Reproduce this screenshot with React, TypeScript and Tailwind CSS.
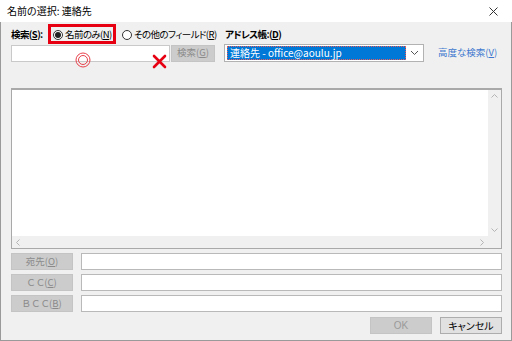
import React from "react";

const jp = "font-['Noto_Sans_CJK_JP','Noto_Sans',sans-serif] [font-feature-settings:'palt']";

function Radio({ checked }: { checked?: boolean }) {
  return (
    <span className="w-[10px] h-[10px] rounded-full border border-[#333] bg-white flex items-center justify-center shrink-0">
      {checked && <span className="w-[6px] h-[6px] rounded-full bg-[#222]" />}
    </span>
  );
}

function GrayButton({ children, className = "" }: { children: React.ReactNode; className?: string }) {
  return (
    <div className={`h-[17px] shrink-0 bg-[#cccccc] border border-[#c4c4c4] flex items-center justify-center whitespace-nowrap text-[#8a8a8a] text-[9.5px] leading-none ${className}`}>
      {children}
    </div>
  );
}

function RecipientRow({ label }: { label: React.ReactNode }) {
  return (
    <div className="flex items-center h-[17px]">
      <GrayButton className="w-[62px]">{label}</GrayButton>
      <div className="ml-[8px] flex-1 h-[17px] bg-white border border-[#b9b9b9]" />
    </div>
  );
}

export default function App() {
  return (
    <div className={`w-[512px] h-[341px] flex flex-col text-[9.5px] text-black whitespace-nowrap ${jp}`}>
      {/* Title bar */}
      <div className="h-[22px] bg-white flex items-center justify-between pl-[7px] pr-[14px] shrink-0">
        <span className="text-[10px] leading-none">名前の選択: 連絡先</span>
        <svg width="9" height="9" viewBox="0 0 9 9" className="text-[#333]">
          <path d="M0.5 0.5 L8.5 8.5 M8.5 0.5 L0.5 8.5" stroke="currentColor" strokeWidth="1" />
        </svg>
      </div>

      {/* Body */}
      <div className="relative flex-1 bg-[#f0f0f0] border-x border-b border-[#9a9a9a] pl-[10px] pr-[9px] flex flex-col">
        {/* Row 1 */}
        <div className="mt-[4px] h-[18px] flex items-center leading-none tracking-[-0.6px]">
          <span className="w-[39px] shrink-0 font-bold">
            検索(<span className="underline">S</span>):
          </span>
          <div className="w-[71px] shrink-0 flex items-center pl-[3px] gap-[2px]">
            <Radio checked />
            <span>名前のみ(<span className="underline">N</span>)</span>
          </div>
          <div className="w-[104px] shrink-0 flex items-center pl-[1px] gap-[2px]">
            <Radio />
            <span>その他のフィールド(<span className="underline">R</span>)</span>
          </div>
          <span className="font-bold">
            アドレス帳:(<span className="underline">D</span>)
          </span>
        </div>

        {/* Row 2 */}
        <div className="h-[18px] flex items-center">
          <div className="w-[159px] shrink-0 h-[17px] bg-white border border-[#c9c9c9]" />
          <GrayButton className="w-[44px] ml-[1px]">
            検索(<span className="underline">G</span>)
          </GrayButton>
          <div className="ml-[9px] w-[200px] shrink-0 h-[18px] bg-white border border-[#b2b2b2] flex items-center pl-[2px] pr-[4px]">
            <div className="flex-1 h-[14px] bg-[#0078d7] border border-dotted border-[#e85a5a] flex items-center pl-[2px] text-white text-[10px] leading-none">
              連絡先 - office@aoulu.jp
            </div>
            <svg width="9" height="6" viewBox="0 0 9 6" className="ml-[4px] text-[#555]">
              <path d="M1 1 L4.5 4.5 L8 1" fill="none" stroke="currentColor" strokeWidth="1" />
            </svg>
          </div>
          <span className="ml-[14px] text-[#3f79cf] leading-none text-[9.5px]">
            高度な検索(<span className="underline">V</span>)
          </span>
        </div>

        {/* List */}
        <div className="mt-[26px] h-[161px] border border-[#a9a9a9] border-t-2 bg-white flex flex-col">
          <div className="flex-1 flex">
            <div className="flex-1" />
            <div className="w-[13px] bg-[#f0f0f0] flex flex-col items-center justify-between py-[4px]">
              <svg width="7" height="4" viewBox="0 0 7 4">
                <path d="M0.5 3.5 L3.5 0.5 L6.5 3.5" fill="none" stroke="#b5b5b5" strokeWidth="1" />
              </svg>
              <svg width="7" height="4" viewBox="0 0 7 4">
                <path d="M0.5 0.5 L3.5 3.5 L6.5 0.5" fill="none" stroke="#b5b5b5" strokeWidth="1" />
              </svg>
            </div>
          </div>
          <div className="h-[12px] flex">
            <div className="flex-1 bg-[#f0f0f0] flex items-center justify-between px-[4px]">
              <svg width="4" height="7" viewBox="0 0 4 7">
                <path d="M3.5 0.5 L0.5 3.5 L3.5 6.5" fill="none" stroke="#b5b5b5" strokeWidth="1" />
              </svg>
              <svg width="4" height="7" viewBox="0 0 4 7">
                <path d="M0.5 0.5 L3.5 3.5 L0.5 6.5" fill="none" stroke="#b5b5b5" strokeWidth="1" />
              </svg>
            </div>
            <div className="w-[13px] bg-[#f0f0f0]" />
          </div>
        </div>

        {/* Recipients */}
        <div className="mt-[4px] flex flex-col gap-[4px]">
          <RecipientRow label={<>宛先(<span className="underline">O</span>)</>} />
          <RecipientRow label={<>Ｃ Ｃ(<span className="underline">C</span>)</>} />
          <RecipientRow label={<>Ｂ Ｃ Ｃ(<span className="underline">B</span>)</>} />
        </div>

        {/* OK / Cancel */}
        <div className="mt-[5px] flex justify-end gap-[8px]">
          <div className="w-[62px] h-[17px] bg-[#cccccc] border border-[#c4c4c4] flex items-center justify-center text-[#9a9a9a] text-[10px] leading-none font-['Liberation_Sans',sans-serif]">
            OK
          </div>
          <div className="w-[62px] h-[17px] bg-[#e1e1e1] border border-[#adadad] flex items-center justify-center text-[10px] leading-none">
            キャンセル
          </div>
        </div>

        {/* Annotations (overlay) */}
        <div className="absolute left-[47px] top-[2px] w-[68px] h-[20px] border-[3px] border-[#e60012]" />
        <svg className="absolute left-[74px] top-[30px]" width="16" height="16" viewBox="0 0 16 16">
          <circle cx="8" cy="8" r="7" fill="none" stroke="#e8404a" strokeWidth="1" />
          <circle cx="8" cy="8" r="4.5" fill="none" stroke="#e8404a" strokeWidth="1" />
        </svg>
        <svg className="absolute left-[151px] top-[32px]" width="15" height="15" viewBox="0 0 15 15">
          <path d="M2 2 L13 13 M13 2 L2 13" stroke="#e60012" strokeWidth="2.6" strokeLinecap="round" />
        </svg>
      </div>
    </div>
  );
}
